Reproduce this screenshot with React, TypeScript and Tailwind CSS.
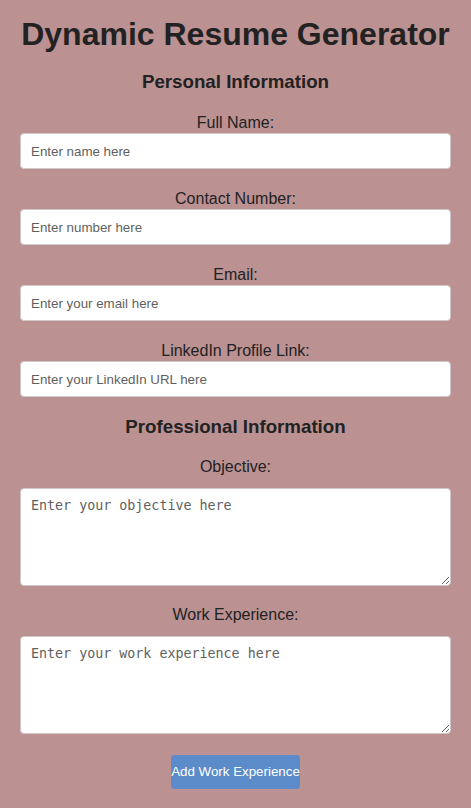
import React from "react";

function Field({ label, placeholder }: { label: string; placeholder: string }) {
  return (
    <div className="flex flex-col mb-[20px]">
      <label className="block text-center text-[16px] leading-[20px]">{label}</label>
      <input
        type="text"
        placeholder={placeholder}
        className="h-[36px] w-full bg-white border border-[#cfc8c8] rounded-[4px] px-[10px] text-[13.33px] text-[#222] placeholder:text-[#5f5f5f] outline-none"
        style={{ fontFamily: '"Liberation Sans", Arial, sans-serif' }}
      />
    </div>
  );
}

function Area({ label, placeholder }: { label: string; placeholder: string }) {
  return (
    <div className="flex flex-col">
      <label className="block text-center text-[16px] leading-[20px] mb-[11px]">{label}</label>
      <textarea
        placeholder={placeholder}
        className="h-[98px] w-full bg-white border border-[#cfc8c8] rounded-[4px] px-[10px] py-[9px] text-[13.33px] leading-[16px] text-[#222] placeholder:text-[#5f5f5f] outline-none font-['DejaVu_Sans_Mono',monospace]"
      />
    </div>
  );
}

export default function App() {
  return (
    <div className="min-h-screen bg-[#bb9192] px-[20px] text-[#222] font-['Liberation_Sans',Arial,sans-serif]">
      <h1 className="text-[32px] font-bold text-center leading-[37px] pt-[16px] mb-[17px]">
        Dynamic Resume Generator
      </h1>
      <h3 className="text-[18.72px] font-bold text-center leading-[24px] mb-[19px]">
        Personal Information
      </h3>
      <Field label="Full Name:" placeholder="Enter name here" />
      <Field label="Contact Number:" placeholder="Enter number here" />
      <Field label="Email:" placeholder="Enter your email here" />
      <div className="mb-[-2px]">
        <Field label="LinkedIn Profile Link:" placeholder="Enter your LinkedIn URL here" />
      </div>
      <h3 className="text-[18.72px] font-bold text-center leading-[24px] mb-[18px]">
        Professional Information
      </h3>
      <Area label="Objective:" placeholder="Enter your objective here" />
      <div className="h-[19px]" />
      <Area label="Work Experience:" placeholder="Enter your work experience here" />
      <div className="flex justify-center pt-[21px] pb-[19px]">
        <button className="h-[34px] w-[129px] rounded-[4px] bg-[#5b8bc8] text-white text-[13.33px] px-0 whitespace-nowrap">
          Add Work Experience
        </button>
      </div>
    </div>
  );
}
